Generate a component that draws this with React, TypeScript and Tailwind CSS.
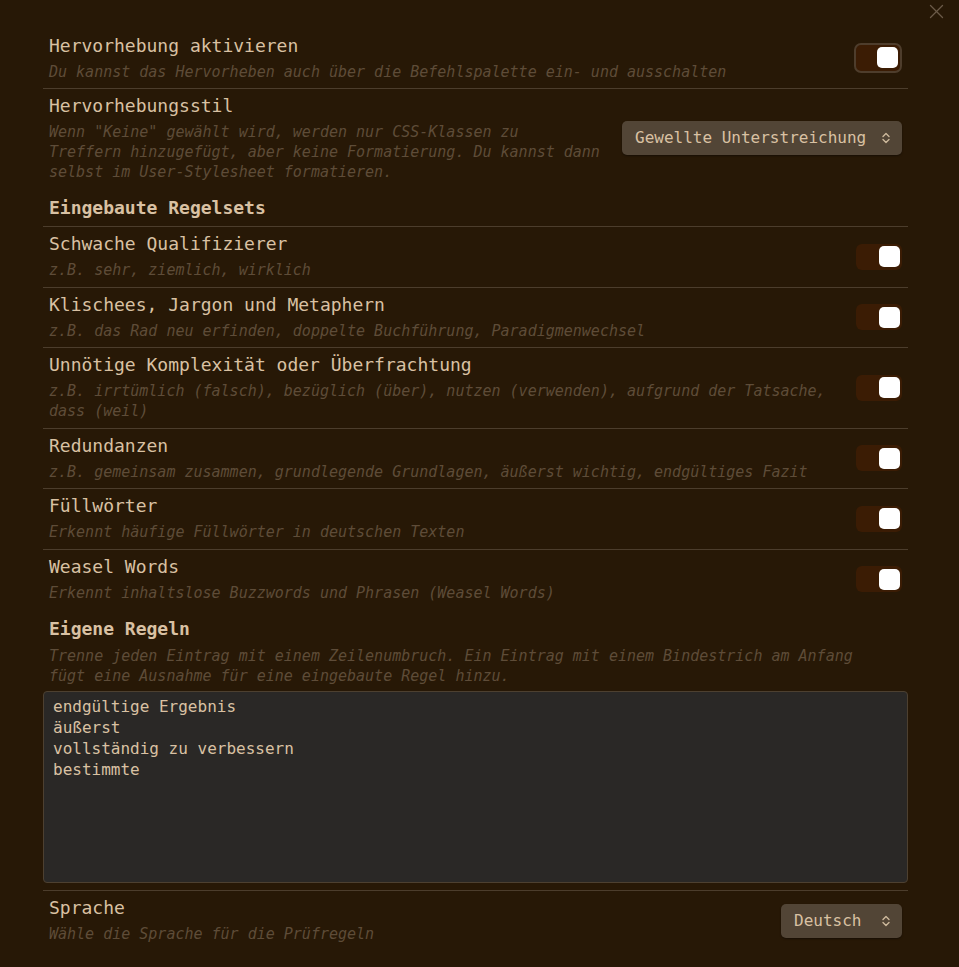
import { useState } from 'react';

const mono = "font-['DejaVu_Sans_Mono','Liberation_Mono',monospace]";

type Rule = { title: string; desc: string; on: boolean };

const builtIn: Rule[] = [
  { title: 'Schwache Qualifizierer', desc: 'z.B. sehr, ziemlich, wirklich', on: true },
  { title: 'Klischees, Jargon und Metaphern', desc: 'z.B. das Rad neu erfinden, doppelte Buchführung, Paradigmenwechsel', on: true },
  {
    title: 'Unnötige Komplexität oder Überfrachtung',
    desc: 'z.B. irrtümlich (falsch), bezüglich (über), nutzen (verwenden), aufgrund der Tatsache, dass (weil)',
    on: true,
  },
  { title: 'Redundanzen', desc: 'z.B. gemeinsam zusammen, grundlegende Grundlagen, äußerst wichtig, endgültiges Fazit', on: true },
  { title: 'Füllwörter', desc: 'Erkennt häufige Füllwörter in deutschen Texten', on: true },
  { title: 'Weasel Words', desc: 'Erkennt inhaltslose Buzzwords und Phrasen (Weasel Words)', on: true },
];

const Toggle = ({ on, focused, onClick }: { on: boolean; focused?: boolean; onClick: () => void }) => (
  <button
    onClick={onClick}
    className={`shrink-0 flex items-center ${
      focused
        ? 'w-[48px] h-[30px] rounded-[7px] border-2 border-[#4e3d2c] px-[2px]'
        : 'w-[46px] h-[26px] rounded-[6px] px-[2px]'
    } ${on ? 'bg-[#3b1c04] justify-end' : 'bg-[#3a2d20] justify-start'}`}
  >
    <span className="w-[21px] h-[21px] rounded-[5px] bg-white" />
  </button>
);

const Chevrons = () => (
  <svg width="10" height="14" viewBox="0 0 10 14" fill="none" stroke="currentColor" strokeWidth="1.4" strokeLinecap="round" strokeLinejoin="round">
    <path d="M2 5.5 L5 2.5 L8 5.5" />
    <path d="M2 8.5 L5 11.5 L8 8.5" />
  </svg>
);

const Select = ({ value, className }: { value: string; className: string }) => (
  <div
    className={`shrink-0 h-[34px] rounded-[5px] bg-[#524536] shadow-[0_1px_2px_rgba(0,0,0,0.4)] flex items-center justify-between pl-[13px] pr-[11px] text-[16px] text-[#d9c1a3] ${className}`}
  >
    <span>{value}</span>
    <span className="text-[#cdb99c]">
      <Chevrons />
    </span>
  </div>
);

export default function App() {
  const [main, setMain] = useState(true);
  const [rules, setRules] = useState(builtIn);

  const flip = (i: number) => setRules(r => r.map((x, j) => (j === i ? { ...x, on: !x.on } : x)));

  return (
    <div className={`${mono} relative min-h-[967px] w-[959px] bg-[#271806] text-[#d9c1a3]`}>
      <button className="absolute right-[15px] top-[4px] text-[#6b5a48]">
        <svg width="15" height="15" viewBox="0 0 15 15" fill="none" stroke="currentColor" strokeWidth="1.3" strokeLinecap="round">
          <path d="M1.5 1.5 L13.5 13.5" />
          <path d="M13.5 1.5 L1.5 13.5" />
        </svg>
      </button>

      <div className="ml-[43px] w-[865px] pt-[29px]">
        {/* Hervorhebung */}
        <div className="flex items-center gap-4 px-[6px] pt-[6px] pb-[6px] border-b border-[#4c3d2c]">
          <div className="flex-1">
            <div className="text-[18px] leading-[22px]">Hervorhebung aktivieren</div>
            <div className="mt-[5px] text-[15px] leading-[20px] italic text-[#5e4c38]">
              Du kannst das Hervorheben auch über die Befehlspalette ein- und ausschalten
            </div>
          </div>
          <div className="-mt-[2px]">
            <Toggle on={main} focused onClick={() => setMain(!main)} />
          </div>
        </div>

        <div className="flex items-center gap-4 px-[6px] pt-[6px] pb-[6px]">
          <div className="flex-1">
            <div className="text-[18px] leading-[22px]">Hervorhebungsstil</div>
            <div className="mt-[5px] text-[15px] leading-[20px] italic text-[#5e4c38]">
              Wenn "Keine" gewählt wird, werden nur CSS-Klassen zu
              <br />
              Treffern hinzugefügt, aber keine Formatierung. Du kannst dann
              <br />
              selbst im User-Stylesheet formatieren.
            </div>
          </div>
          <Select value="Gewellte Unterstreichung" className="w-[280px] gap-3 -mt-[2px]" />
        </div>

        <div className="px-[6px] pt-[9px] pb-[7px] border-b border-[#4c3d2c] text-[18px] leading-[22px] font-bold">
          Eingebaute Regelsets
        </div>

        {rules.map((r, i) => (
          <div
            key={r.title}
            className={`flex items-center gap-4 px-[6px] pt-[6px] pb-[6.5px] ${i < rules.length - 1 ? 'border-b border-[#4c3d2c]' : ''}`}
          >
            <div className="flex-1">
              <div className="text-[18px] leading-[22px]">{r.title}</div>
              <div className="mt-[5px] text-[15px] leading-[20px] italic text-[#5e4c38]">{r.desc}</div>
            </div>
            <Toggle on={r.on} onClick={() => flip(i)} />
          </div>
        ))}

        {/* Eigene Regeln */}
        <div className="pt-[9px] pb-[7px] border-b border-[#4c3d2c]">
          <div className="px-[6px]">
            <div className="text-[18px] leading-[22px] font-bold">Eigene Regeln</div>
            <div className="mt-[6px] text-[15px] leading-[20px] italic text-[#5e4c38]">
              Trenne jeden Eintrag mit einem Zeilenumbruch. Ein Eintrag mit einem Bindestrich am Anfang
              <br />
              fügt eine Ausnahme für eine eingebaute Regel hinzu.
            </div>
          </div>
          <textarea
            className={`${mono} mt-[5px] block w-full h-[192px] resize-none rounded-[4px] border border-[#4d4030] bg-[#2a2826] px-[9px] pt-[4px] text-[16px] leading-[21px] text-[#d9c1a3] outline-none`}
            defaultValue={'endgültige Ergebnis\näußerst\nvollständig zu verbessern\nbestimmte'}
          />
        </div>

        <div className="flex items-center gap-4 px-[6px] pt-[6px] pb-[7px]">
          <div className="flex-1">
            <div className="text-[18px] leading-[22px]">Sprache</div>
            <div className="mt-[5px] text-[15px] leading-[20px] italic text-[#5e4c38]">Wähle die Sprache für die Prüfregeln</div>
          </div>
          <Select value="Deutsch" className="w-[121px]" />
        </div>
      </div>
    </div>
  );
}
